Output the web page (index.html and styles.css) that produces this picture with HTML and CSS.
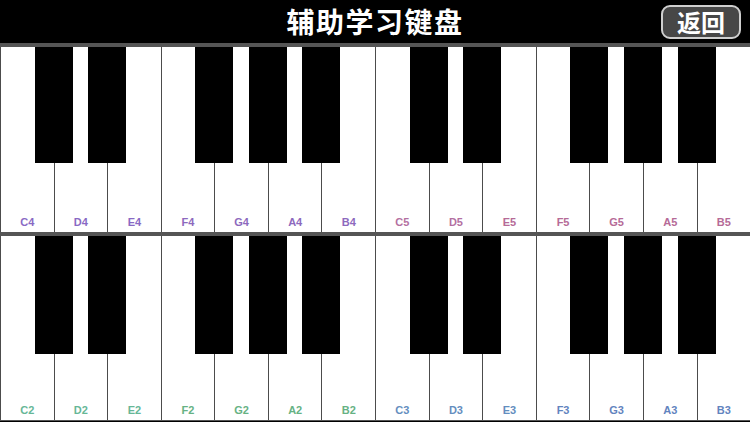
FILE: index.html
```html
<!DOCTYPE html>
<html lang="zh">
<head>
<meta charset="utf-8">
<title>辅助学习键盘</title>
<link rel="stylesheet" href="styles.css">
</head>
<body>
<header class="topbar">
  <div class="spacer"></div>
  <h1 class="title">辅助学习键盘</h1>
  <button class="back">返回</button>
</header>
<div class="divider"></div>
<section class="row">
  <div class="key"><div class="black"></div><span class="label p1">C4</span></div>
  <div class="key"><div class="black"></div><span class="label p1">D4</span></div>
  <div class="key"><span class="label p1">E4</span></div>
  <div class="key"><div class="black"></div><span class="label p2">F4</span></div>
  <div class="key"><div class="black"></div><span class="label p2">G4</span></div>
  <div class="key"><div class="black"></div><span class="label p2">A4</span></div>
  <div class="key"><span class="label p2">B4</span></div>
  <div class="key"><div class="black"></div><span class="label m1">C5</span></div>
  <div class="key"><div class="black"></div><span class="label m1">D5</span></div>
  <div class="key"><span class="label m2">E5</span></div>
  <div class="key"><div class="black"></div><span class="label m2">F5</span></div>
  <div class="key"><div class="black"></div><span class="label m2">G5</span></div>
  <div class="key"><div class="black"></div><span class="label m2">A5</span></div>
  <div class="key"><span class="label m2">B5</span></div>
</section>
<div class="divider"></div>
<section class="row last">
  <div class="key"><div class="black"></div><span class="label g1">C2</span></div>
  <div class="key"><div class="black"></div><span class="label g1">D2</span></div>
  <div class="key"><span class="label g1">E2</span></div>
  <div class="key"><div class="black"></div><span class="label g2">F2</span></div>
  <div class="key"><div class="black"></div><span class="label g2">G2</span></div>
  <div class="key"><div class="black"></div><span class="label g2">A2</span></div>
  <div class="key"><span class="label g2">B2</span></div>
  <div class="key"><div class="black"></div><span class="label b1">C3</span></div>
  <div class="key"><div class="black"></div><span class="label b1">D3</span></div>
  <div class="key"><span class="label b1">E3</span></div>
  <div class="key"><div class="black"></div><span class="label b2">F3</span></div>
  <div class="key"><div class="black"></div><span class="label b2">G3</span></div>
  <div class="key"><div class="black"></div><span class="label b2">A3</span></div>
  <div class="key"><span class="label b2">B3</span></div>
</section>
</body>
</html>
```
FILE: styles.css
```css
html, body {
  margin: 0;
  padding: 0;
  background: #000;
  width: 750px;
  height: 422px;
  overflow: hidden;
  font-family: "Liberation Sans", "Noto Sans CJK SC", sans-serif;
}
.topbar {
  height: 43px;
  display: grid;
  grid-template-columns: 1fr auto 1fr;
  align-items: center;
  background: #000;
}
.title {
  margin: 0;
  color: #fff;
  font-family: "Noto Sans CJK SC", sans-serif;
  font-weight: 700;
  font-size: 28px;
  line-height: 43px;
  letter-spacing: 1.5px;
}
.back {
  justify-self: end;
  margin-right: 9px;
  width: 80px;
  height: 34px;
  padding: 0;
  border: 2px solid #cfcfcf;
  border-radius: 9px;
  background: #474747;
  color: #fff;
  font-family: "Noto Sans CJK SC", sans-serif;
  font-weight: 700;
  font-size: 24px;
  line-height: 28px;
}
.divider {
  height: 4px;
  background: #555;
}
.row {
  height: 185px;
  display: flex;
  background: #fff;
}
.row.last {
  border-bottom: 1px solid #555;
  height: 184px;
}
.key {
  position: relative;
  flex: 1;
  border-left: 1px solid #4c4c4c;
  background: #fff;
  display: flex;
  flex-direction: column;
  justify-content: flex-end;
  align-items: center;
}
.black {
  position: absolute;
  top: 0;
  right: -19px;
  width: 38px;
  height: 116px;
  background: #000;
  z-index: 2;
}
.row.last .black {
  height: 118px;
}
.label {
  font-size: 11px;
  line-height: 12px;
  padding-bottom: 4px;
  font-weight: 700;
  opacity: 0.8;
}
.p1 { color: #6c44b6; }
.p2 { color: #7144ae; }
.m1 { color: #a24c8a; }
.m2 { color: #a4457e; }
.g1 { color: #40a67e; }
.g2 { color: #40a066; }
.b1 { color: #3c72b0; }
.b2 { color: #3a66b0; }
```
